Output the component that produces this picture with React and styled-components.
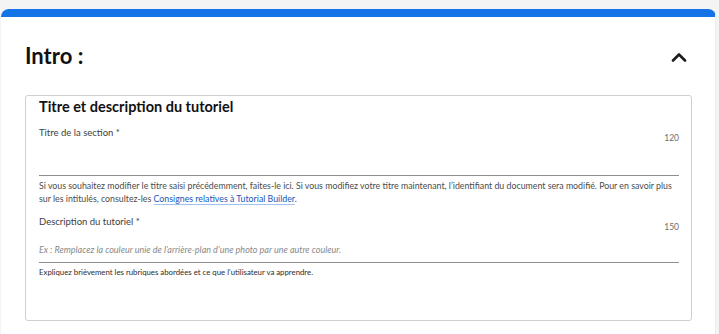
import styled, { createGlobalStyle } from 'styled-components';

const GlobalStyle = createGlobalStyle`
	html, body {
		margin: 0;
		padding: 0;
		background: #f4f4f4;
		font-family: Lato, 'Open Sans', 'Liberation Sans', sans-serif;
	}
	* {
		box-sizing: border-box;
	}
`;

function App() {
	return (
		<Page>
			<GlobalStyle />
			<Card>
				<CardHeader>
					<SectionTitle>Intro :</SectionTitle>
					<ToggleButton aria-label="Réduire">
						<svg width="16" height="10" viewBox="0 0 16 10">
							<path d="M2 8.5 L8 2.5 L14 8.5" fill="none" stroke="#1b1b1b" strokeWidth="2.6" strokeLinecap="round" strokeLinejoin="round" />
						</svg>
					</ToggleButton>
				</CardHeader>
				<FieldGroup>
					<GroupTitle>Titre et description du tutoriel</GroupTitle>

					<Field>
						<LabelRow>
							<Label>Titre de la section *</Label>
							<Counter>120</Counter>
						</LabelRow>
						<Input tall />
						<HelpText>
							Si vous souhaitez modifier le titre saisi précédemment, faites-le ici. Si vous modifiez votre titre maintenant, l’identifiant du document sera modifié. Pour en savoir plus sur les intitulés, consultez-les{' '}
							<HelpLink href="#">Consignes relatives à Tutorial Builder</HelpLink>.
						</HelpText>
					</Field>

					<Field second>
						<LabelRow>
							<Label>Description du tutoriel *</Label>
							<Counter>150</Counter>
						</LabelRow>
						<Input placeholder="Ex : Remplacez la couleur unie de l’arrière-plan d’une photo par une autre couleur." />
						<HelpText small>Expliquez brièvement les rubriques abordées et ce que l’utilisateur va apprendre.</HelpText>
					</Field>
				</FieldGroup>
			</Card>
		</Page>
	);
}

const Page = styled.div`
	padding: 9px 3px 0 1px;
	min-height: 334px;
`;

const Card = styled.div`
	background: #ffffff;
	border-top: 8px solid #1473e6;
	border-radius: 8px 8px 0 0;
	border-right: 1px solid #ececec;
	min-height: 325px;
	padding-bottom: 14px;
`;

const CardHeader = styled.div`
	display: flex;
	align-items: center;
	justify-content: space-between;
	padding: 0 28px 0 24px;
	height: 78px;
`;

const SectionTitle = styled.h2`
	margin: 0;
	font-size: 22px;
	font-weight: 700;
	color: #111;
	line-height: 26px;
`;

const ToggleButton = styled.button`
	background: none;
	border: none;
	padding: 0;
	display: flex;
	cursor: pointer;
	margin-top: 2px;
`;

const FieldGroup = styled.div`
	margin: 0 23px 0 24px;
	border: 1px solid #cfcfcf;
	border-radius: 3px;
	padding: 1px 12px 0 13px;
	height: 226px;
`;

const GroupTitle = styled.h3`
	margin: 0;
	font-size: 14.5px;
	font-weight: 700;
	color: #111;
	line-height: 20px;
`;

const Field = styled.div`
	display: flex;
	flex-direction: column;
	margin-top: ${(props) => (props.second ? '10px' : '9px')};
`;

const LabelRow = styled.div`
	display: flex;
	justify-content: space-between;
	align-items: flex-end;
`;

const Label = styled.label`
	font-size: 9.5px;
	color: #3d3d3d;
	line-height: 14px;
`;

const Counter = styled.span`
	font-size: 8.5px;
	color: #6e6e6e;
	line-height: 12px;
	margin-bottom: -4px;
`;

const Input = styled.input`
	border: none;
	border-bottom: 1px solid #8e8e8e;
	outline: none;
	background: transparent;
	padding: ${(props) => (props.tall ? '0' : '8px 0 0')};
	height: ${(props) => (props.tall ? '36px' : '34px')};
	font-family: inherit;
	font-size: 9px;
	&::placeholder {
		font-style: italic;
		color: #8a8a8a;
	}
`;

const HelpText = styled.p`
	margin: 3px 0 0;
	font-size: ${(props) => (props.small ? '7.8px' : '8.8px')};
	line-height: ${(props) => (props.small ? '12px' : '13px')};
	color: ${(props) => (props.small ? '#2c2c2c' : '#4b4b4b')};
`;

const HelpLink = styled.a`
	color: #1756b8;
	text-decoration: underline;
	text-decoration-color: #9ec2ef;
	text-underline-offset: 2px;
`;

export default App;
